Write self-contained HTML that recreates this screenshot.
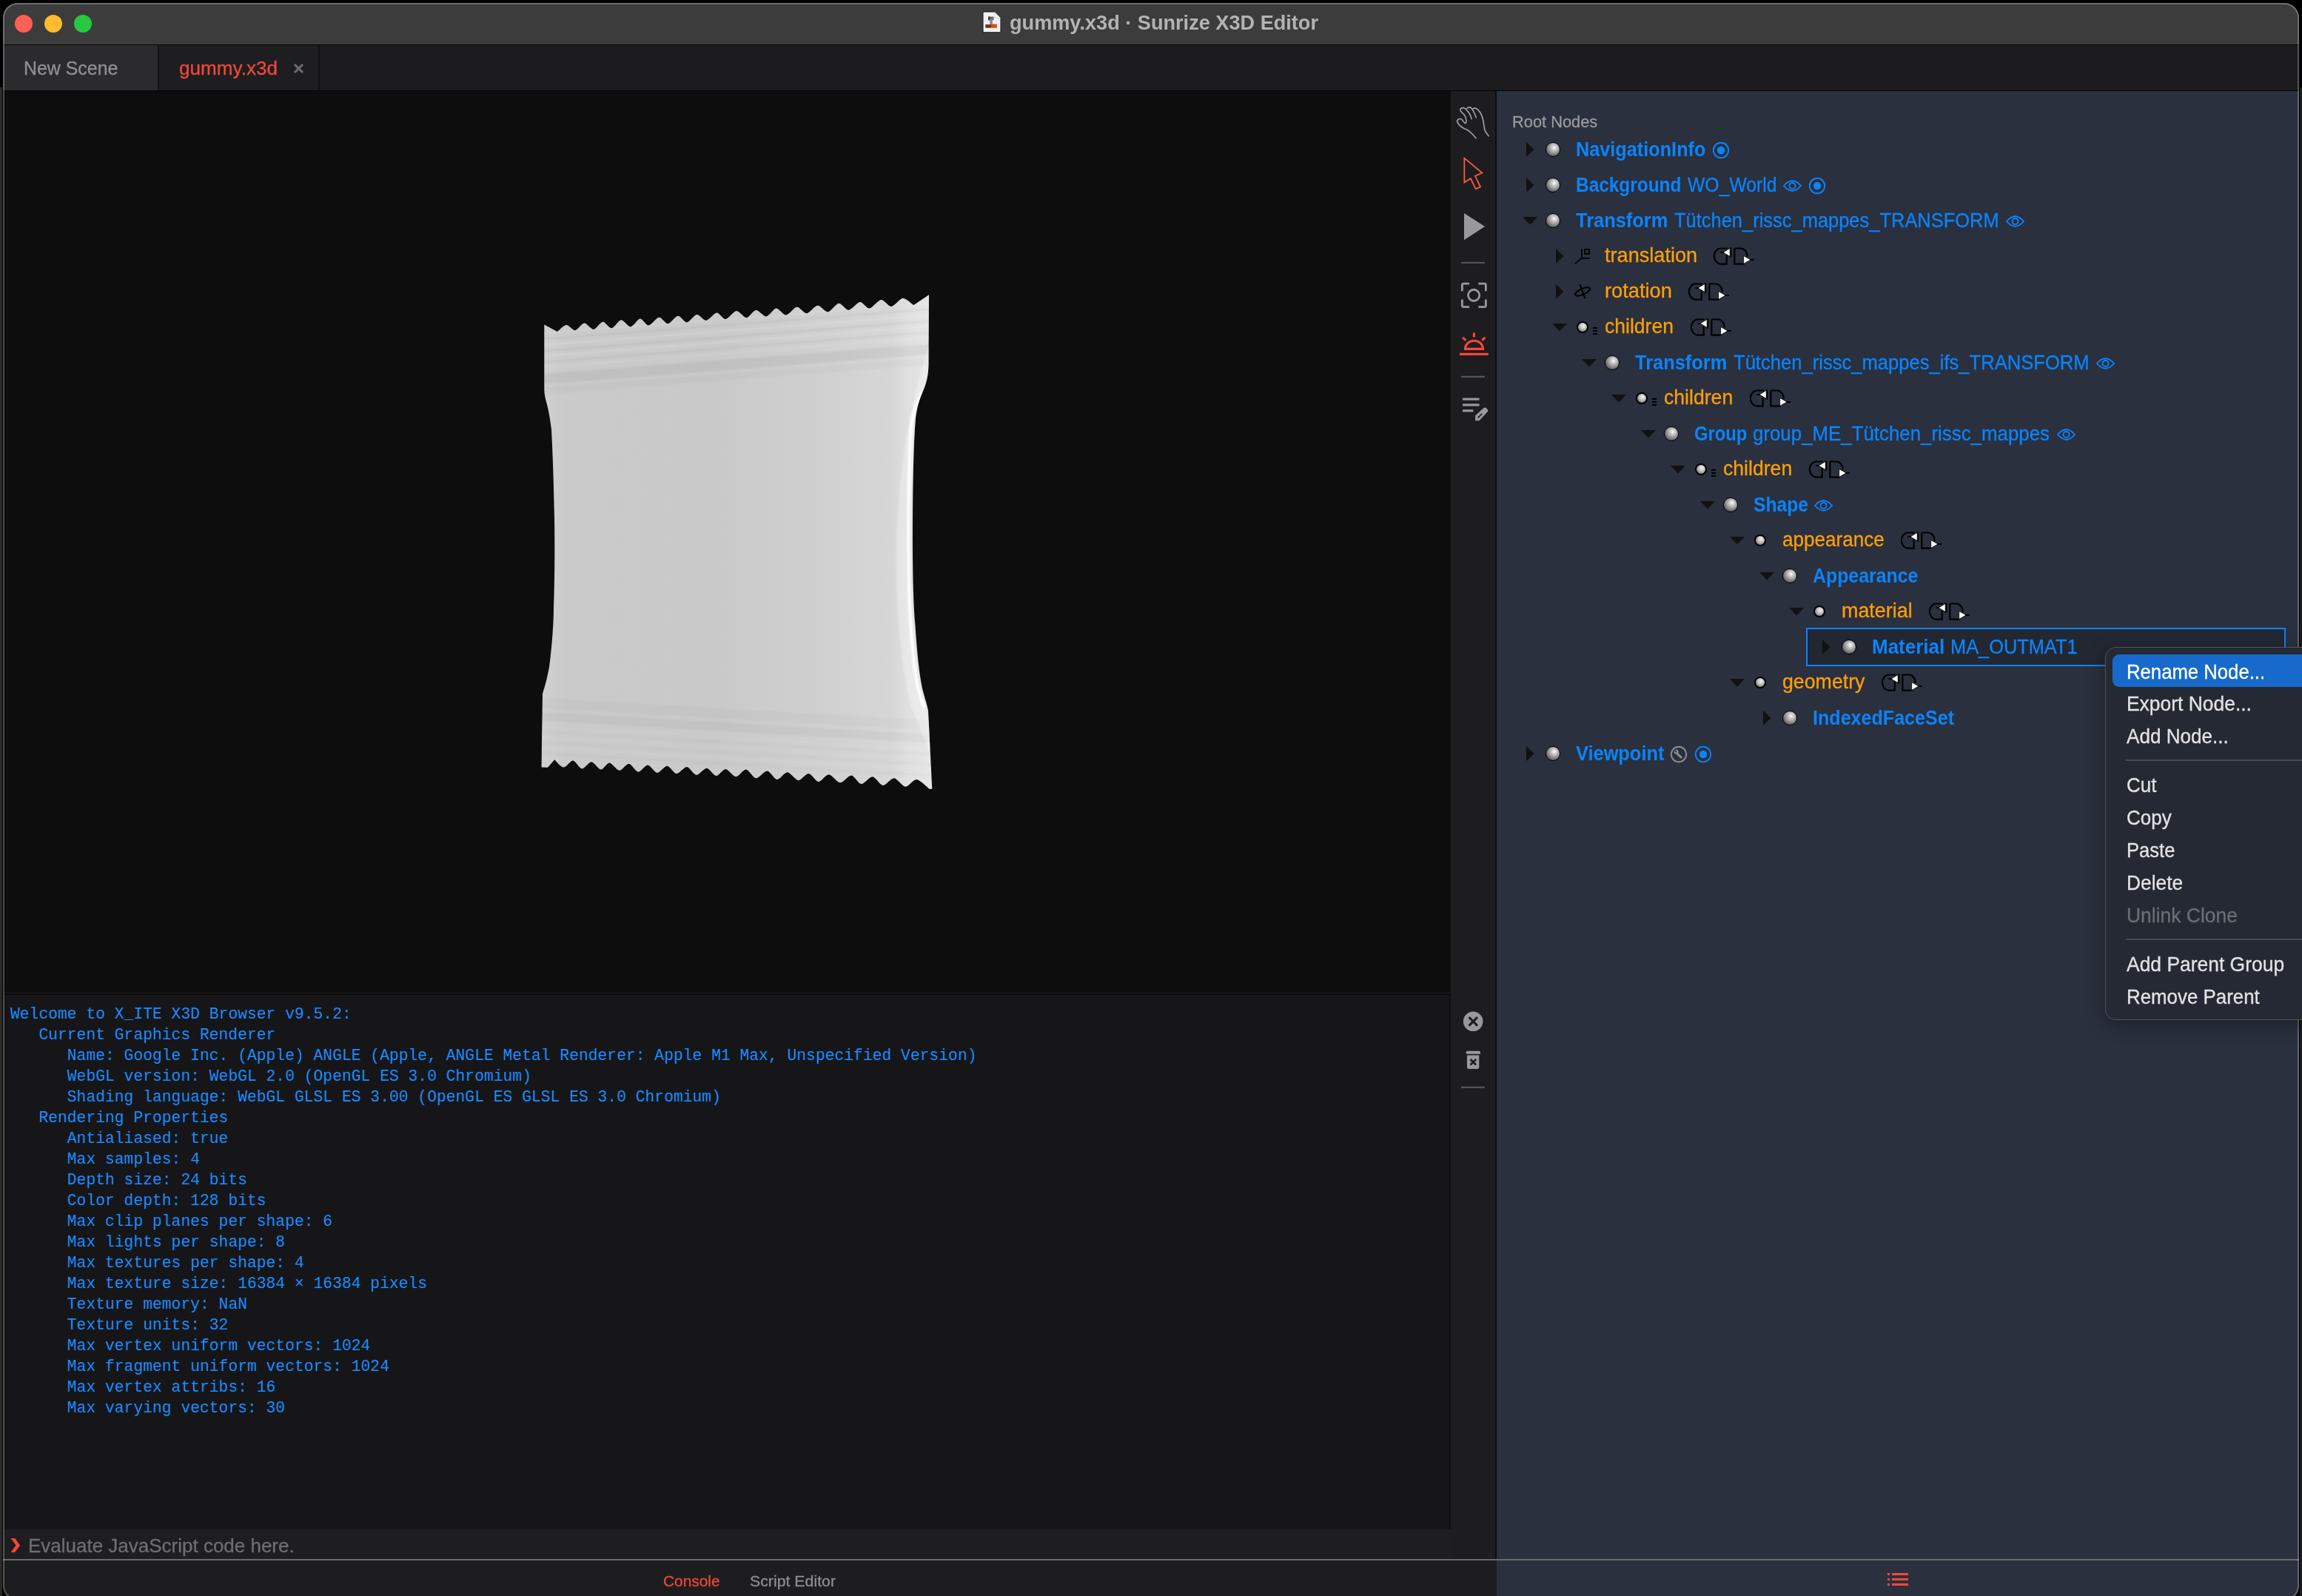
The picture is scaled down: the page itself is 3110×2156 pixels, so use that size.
<!DOCTYPE html>
<html><head><meta charset="utf-8">
<style>
*{margin:0;padding:0;box-sizing:border-box}
html,body{width:3110px;height:2156px;overflow:hidden;background:#000;font-family:"Liberation Sans",sans-serif}
.a{position:absolute;display:block}
.tx{position:absolute;line-height:0;height:0;white-space:pre}
#win{position:absolute;left:4px;top:4px;width:3102px;height:2158px;border-radius:20px;overflow:hidden;background:#1d1d1f}
#c{position:absolute;left:-4px;top:-4px;width:3110px;height:2170px}
#brd{position:absolute;left:4px;top:4px;width:3102px;height:2158px;border-radius:20px;border:2px solid rgba(255,255,255,0.25);pointer-events:none}
</style></head><body>
<div style="position:absolute;left:0;top:118px;width:3px;height:2038px;background:#2a2a26"></div><div style="position:absolute;left:3107px;top:118px;width:3px;height:2038px;background:#1c1c1c"></div>
<div id="win"><div id="c">
<div class="a" style="left:0px;top:0px;width:3110px;height:60px;background:#3c3c3c;"></div>
<div class="a" style="left:0px;top:60px;width:3110px;height:1px;background:#050505;"></div>
<div class="a" style="left:20px;top:20px;width:24px;height:24px;background:#fe5f57;border-radius:50%"></div>
<div class="a" style="left:60px;top:20px;width:24px;height:24px;background:#febc2e;border-radius:50%"></div>
<div class="a" style="left:100px;top:20px;width:24px;height:24px;background:#28c840;border-radius:50%"></div>
<div class="a" style="left:0px;top:61px;width:3110px;height:61px;background:#1c1c1e;"></div>
<div class="a" style="left:0px;top:61px;width:213px;height:61px;background:#2b2b2d;"></div>
<div class="a" style="left:213px;top:61px;width:2px;height:61px;background:#121214;"></div>
<div class="a" style="left:215px;top:61px;width:215px;height:61px;background:#1e1e20;"></div>
<div class="a" style="left:430px;top:61px;width:2px;height:61px;background:#121214;"></div>
<div class="a" style="left:0px;top:122px;width:3110px;height:1px;background:#050505;"></div>
<div class="a" style="left:0px;top:123px;width:1960px;height:1218px;background:#0d0d0d;"></div>
<div class="a" style="left:1960px;top:123px;width:61px;height:1983px;background:#1d1d1f;"></div>
<div class="a" style="left:2020px;top:123px;width:2px;height:1983px;background:#0b0b0c;"></div>
<div class="a" style="left:2022px;top:123px;width:1088px;height:1983px;background:#2a303d;"></div>
<div class="a" style="left:0px;top:1341px;width:1960px;height:1px;background:#1f1f20;"></div>
<div class="a" style="left:0px;top:1342px;width:1960px;height:2px;background:#0b0b0c;"></div>
<div class="a" style="left:0px;top:1344px;width:1960px;height:722px;background:#161618;"></div>
<div class="a" style="left:0px;top:2066px;width:1960px;height:40px;background:#1e1e20;"></div>
<div class="a" style="left:1958px;top:1344px;width:2px;height:722px;background:#0e0e0f;"></div>
<div class="a" style="left:0px;top:2106px;width:3110px;height:2px;background:#6a6a6a;"></div>
<div class="a" style="left:0px;top:2108px;width:2022px;height:60px;background:#1d1d1f;"></div>
<div class="a" style="left:2022px;top:2108px;width:1088px;height:60px;background:#2a303d;"></div>
<svg class="a" style="left:1320px;top:10px;" width="40" height="40" viewBox="0 0 1596 1596">
<path d="M320,290 Q320,240 370,240 L945,240 L1275,570 L1275,1300 Q1275,1350 1225,1350 L370,1350 Q320,1350 320,1300 Z" fill="#f2f2f2" stroke="#1a1a1a" stroke-width="40"/>
<path d="M945,250 L945,560 L1265,570 Z" fill="#fafafa" stroke="#bdbdbd" stroke-width="25"/>
<rect x="600" y="500" width="300" height="190" fill="#6d6f6c"/>
<rect x="600" y="500" width="110" height="190" fill="#3c403e"/>
<rect x="690" y="640" width="140" height="270" fill="#888a84"/>
<rect x="450" y="920" width="290" height="185" fill="#6a3620"/>
<rect x="740" y="900" width="330" height="205" fill="#e2451e"/>
<rect x="720" y="890" width="25" height="215" fill="#3a2a20"/>
</svg>
<div class="tx" style='left:1364px;top:31px;font-family:"Liberation Sans",sans-serif;font-size:27px;font-weight:bold;white-space:pre;color:#b3b3b3;transform:scaleX(1.0046);transform-origin:0 0;'>gummy.x3d · Sunrize X3D Editor</div>
<div class="tx" style='left:31.6px;top:92px;font-family:"Liberation Sans",sans-serif;font-size:25px;font-weight:normal;white-space:pre;color:#8f8f94;transform:scaleX(0.9964);transform-origin:0 0;-webkit-text-stroke:0.3px #8f8f94'>New Scene</div>
<div class="tx" style='left:241.7px;top:92px;font-family:"Liberation Sans",sans-serif;font-size:26px;font-weight:normal;white-space:pre;color:#f0473a;transform:scaleX(1.0041);transform-origin:0 0;-webkit-text-stroke:0.3px #f0473a'>gummy.x3d</div>
<svg class="a" style="left:396px;top:85px;" width="15" height="15" viewBox="0 0 15 15"><path d="M2,2 L13,13 M13,2 L2,13" stroke="#6e6e72" stroke-width="3"/></svg>
<svg class="a" style="left:700px;top:380px;" width="580" height="700" viewBox="700 380 580 700">
<defs>
<linearGradient id="bg1" gradientUnits="userSpaceOnUse" x1="731" y1="0" x2="1259" y2="0">
<stop offset="0" stop-color="#d0d0d0"/><stop offset="0.06" stop-color="#cacaca"/><stop offset="0.45" stop-color="#c9c9c9"/><stop offset="0.75" stop-color="#d1d1d1"/><stop offset="0.9" stop-color="#d7d7d7"/><stop offset="0.94" stop-color="#e0e0e0"/><stop offset="1" stop-color="#e6e6e6"/>
</linearGradient>
<clipPath id="bagc"><path d="M735.3,438.4 L752.8,448.1 C754.5,446.8 761.6,439.3 765,439 C768.4,438.7 773.8,446.6 777.2,446.3 C780.6,446.0 785.8,436.8 789.3,436.6 C792.8,436.4 798.5,445.3 802,445 C805.5,444.7 810.9,434.9 814.3,434.7 C817.7,434.5 822.9,443.6 826.4,443.3 C829.9,443.0 835.6,432.6 839.2,432.3 C842.8,432.0 848.4,441.7 852,441.4 C855.6,441.1 861.4,430.8 864.8,430.5 C868.2,430.2 872.7,439.9 876.3,439.6 C879.9,439.3 886.6,429.0 890.3,428.7 C894.0,428.4 898.9,437.5 902.5,437.2 C906.1,436.9 912.3,427.1 915.9,426.8 C919.5,426.5 924.4,435.7 928,435.4 C931.6,435.1 937.7,425.4 941.4,425 C945.1,424.6 950.4,433.2 954.2,432.9 C958.0,432.6 964.5,422.9 968.2,422.6 C971.9,422.3 976.5,431.5 980.3,431.1 C984.1,430.8 991.1,420.4 995,420.1 C998.9,419.8 1004.8,429.5 1008.5,429.3 C1012.2,429.1 1017.5,419.2 1021.3,418.9 C1025.1,418.6 1031.5,427.7 1035.3,427.4 C1039.1,427.1 1045.0,416.8 1048.7,416.5 C1052.4,416.2 1058.1,425.9 1062,425.6 C1065.9,425.3 1072.7,415.0 1076.6,414.7 C1080.5,414.4 1086.1,423.5 1090,423.2 C1093.9,422.9 1100.6,413.1 1104.6,412.8 C1108.6,412.5 1114.6,421.8 1118.6,421.4 C1122.6,421.0 1129.3,410.2 1133.2,409.8 C1137.1,409.4 1142.6,419.2 1146.6,418.9 C1150.6,418.6 1157.9,408.3 1161.8,408 C1165.7,407.7 1170.6,416.9 1174.6,416.5 C1178.6,416.1 1186.2,405.2 1190.4,404.9 C1194.6,404.5 1200.3,414.3 1204.4,414 C1208.5,413.7 1215.4,403.4 1219.6,403.1 C1223.8,402.8 1232.2,410.9 1234.2,412.2 L1255,398.2 L1254.5,492 C1254.3,506 1252,516 1248,526 C1243,537 1239,548 1237,565 C1234,600 1233,660 1233,741 C1233.2,790 1234.5,825 1236.5,845 C1238.5,875 1241,905 1246,930 C1249,942 1252,950 1254,960 L1259.3,1065.8 L1255.5,1065.8 C1253.1,1064.0 1242.9,1053.4 1238.4,1053 C1233.9,1052.6 1227.5,1063.0 1223.2,1062.7 C1218.9,1062.4 1212.3,1051.5 1208,1051.2 C1203.7,1050.9 1196.9,1061.2 1192.8,1060.9 C1188.7,1060.6 1182.9,1049.6 1178.8,1049.3 C1174.7,1049.0 1167.6,1059.4 1163.6,1059.1 C1159.6,1058.8 1154.2,1047.8 1150.2,1047.5 C1146.2,1047.2 1139.3,1057.5 1135,1057.3 C1130.7,1057.1 1123.9,1046.5 1119.8,1046.3 C1115.7,1046.1 1109.6,1056.2 1105.8,1056 C1102.0,1055.8 1096.3,1045.4 1092.5,1045.1 C1088.7,1044.8 1082.5,1054.5 1078.5,1054.2 C1074.5,1053.9 1067.9,1043.5 1063.9,1043.3 C1059.9,1043.1 1053.7,1053.3 1049.9,1053 C1046.1,1052.7 1040.5,1041.7 1036.5,1041.4 C1032.5,1041.1 1025.3,1051.5 1021.3,1051.2 C1017.3,1050.9 1011.7,1039.9 1007.9,1039.6 C1004.1,1039.3 998.2,1049.4 994.3,1049.3 C990.4,1049.2 984.0,1039.2 980.3,1039 C976.6,1038.8 971.2,1048.3 967.6,1048.1 C964.0,1047.9 958.6,1038.0 954.8,1037.8 C951.0,1037.6 944.6,1047.2 940.8,1046.9 C937.0,1046.6 931.8,1036.3 928,1036 C924.2,1035.7 917.7,1045.3 914,1045.1 C910.3,1044.9 905.0,1034.9 901.3,1034.7 C897.6,1034.5 891.6,1044.1 887.9,1043.9 C884.2,1043.7 878.7,1033.7 875.1,1033.5 C871.5,1033.3 865.9,1043.0 862.3,1042.7 C858.7,1042.4 853.2,1032.0 849.6,1031.7 C846.0,1031.4 840.5,1041.0 836.8,1040.8 C833.1,1040.6 826.9,1030.7 823.4,1030.5 C819.9,1030.3 815.2,1039.8 811.8,1039.6 C808.4,1039.4 802.7,1029.5 799.1,1029.3 C795.5,1029.1 789.8,1038.7 786.3,1038.4 C782.8,1038.1 777.6,1027.7 774.1,1027.4 C770.6,1027.1 764.9,1036.8 761.4,1036.6 C757.9,1036.4 750.9,1027.7 749.2,1026.2 L740,1036.8 L731.6,1036.6 L732,1000 L733,937 C737,925 740,912 742,901 C746,870 748,840 748,821 C749.5,780 749.5,730 749,700 C748,640 746,600 745,580 C743,565 741,553 738,543 C736.5,537 735.5,532 735.3,527 Z"/></clipPath>
<filter id="bl" filterUnits="userSpaceOnUse" x="700" y="380" width="580" height="700"><feGaussianBlur stdDeviation="1.3"/></filter>
<filter id="bl2" filterUnits="userSpaceOnUse" x="700" y="380" width="580" height="700"><feGaussianBlur stdDeviation="0.8"/></filter>
</defs>
<path d="M735.3,438.4 L752.8,448.1 C754.5,446.8 761.6,439.3 765,439 C768.4,438.7 773.8,446.6 777.2,446.3 C780.6,446.0 785.8,436.8 789.3,436.6 C792.8,436.4 798.5,445.3 802,445 C805.5,444.7 810.9,434.9 814.3,434.7 C817.7,434.5 822.9,443.6 826.4,443.3 C829.9,443.0 835.6,432.6 839.2,432.3 C842.8,432.0 848.4,441.7 852,441.4 C855.6,441.1 861.4,430.8 864.8,430.5 C868.2,430.2 872.7,439.9 876.3,439.6 C879.9,439.3 886.6,429.0 890.3,428.7 C894.0,428.4 898.9,437.5 902.5,437.2 C906.1,436.9 912.3,427.1 915.9,426.8 C919.5,426.5 924.4,435.7 928,435.4 C931.6,435.1 937.7,425.4 941.4,425 C945.1,424.6 950.4,433.2 954.2,432.9 C958.0,432.6 964.5,422.9 968.2,422.6 C971.9,422.3 976.5,431.5 980.3,431.1 C984.1,430.8 991.1,420.4 995,420.1 C998.9,419.8 1004.8,429.5 1008.5,429.3 C1012.2,429.1 1017.5,419.2 1021.3,418.9 C1025.1,418.6 1031.5,427.7 1035.3,427.4 C1039.1,427.1 1045.0,416.8 1048.7,416.5 C1052.4,416.2 1058.1,425.9 1062,425.6 C1065.9,425.3 1072.7,415.0 1076.6,414.7 C1080.5,414.4 1086.1,423.5 1090,423.2 C1093.9,422.9 1100.6,413.1 1104.6,412.8 C1108.6,412.5 1114.6,421.8 1118.6,421.4 C1122.6,421.0 1129.3,410.2 1133.2,409.8 C1137.1,409.4 1142.6,419.2 1146.6,418.9 C1150.6,418.6 1157.9,408.3 1161.8,408 C1165.7,407.7 1170.6,416.9 1174.6,416.5 C1178.6,416.1 1186.2,405.2 1190.4,404.9 C1194.6,404.5 1200.3,414.3 1204.4,414 C1208.5,413.7 1215.4,403.4 1219.6,403.1 C1223.8,402.8 1232.2,410.9 1234.2,412.2 L1255,398.2 L1254.5,492 C1254.3,506 1252,516 1248,526 C1243,537 1239,548 1237,565 C1234,600 1233,660 1233,741 C1233.2,790 1234.5,825 1236.5,845 C1238.5,875 1241,905 1246,930 C1249,942 1252,950 1254,960 L1259.3,1065.8 L1255.5,1065.8 C1253.1,1064.0 1242.9,1053.4 1238.4,1053 C1233.9,1052.6 1227.5,1063.0 1223.2,1062.7 C1218.9,1062.4 1212.3,1051.5 1208,1051.2 C1203.7,1050.9 1196.9,1061.2 1192.8,1060.9 C1188.7,1060.6 1182.9,1049.6 1178.8,1049.3 C1174.7,1049.0 1167.6,1059.4 1163.6,1059.1 C1159.6,1058.8 1154.2,1047.8 1150.2,1047.5 C1146.2,1047.2 1139.3,1057.5 1135,1057.3 C1130.7,1057.1 1123.9,1046.5 1119.8,1046.3 C1115.7,1046.1 1109.6,1056.2 1105.8,1056 C1102.0,1055.8 1096.3,1045.4 1092.5,1045.1 C1088.7,1044.8 1082.5,1054.5 1078.5,1054.2 C1074.5,1053.9 1067.9,1043.5 1063.9,1043.3 C1059.9,1043.1 1053.7,1053.3 1049.9,1053 C1046.1,1052.7 1040.5,1041.7 1036.5,1041.4 C1032.5,1041.1 1025.3,1051.5 1021.3,1051.2 C1017.3,1050.9 1011.7,1039.9 1007.9,1039.6 C1004.1,1039.3 998.2,1049.4 994.3,1049.3 C990.4,1049.2 984.0,1039.2 980.3,1039 C976.6,1038.8 971.2,1048.3 967.6,1048.1 C964.0,1047.9 958.6,1038.0 954.8,1037.8 C951.0,1037.6 944.6,1047.2 940.8,1046.9 C937.0,1046.6 931.8,1036.3 928,1036 C924.2,1035.7 917.7,1045.3 914,1045.1 C910.3,1044.9 905.0,1034.9 901.3,1034.7 C897.6,1034.5 891.6,1044.1 887.9,1043.9 C884.2,1043.7 878.7,1033.7 875.1,1033.5 C871.5,1033.3 865.9,1043.0 862.3,1042.7 C858.7,1042.4 853.2,1032.0 849.6,1031.7 C846.0,1031.4 840.5,1041.0 836.8,1040.8 C833.1,1040.6 826.9,1030.7 823.4,1030.5 C819.9,1030.3 815.2,1039.8 811.8,1039.6 C808.4,1039.4 802.7,1029.5 799.1,1029.3 C795.5,1029.1 789.8,1038.7 786.3,1038.4 C782.8,1038.1 777.6,1027.7 774.1,1027.4 C770.6,1027.1 764.9,1036.8 761.4,1036.6 C757.9,1036.4 750.9,1027.7 749.2,1026.2 L740,1036.8 L731.6,1036.6 L732,1000 L733,937 C737,925 740,912 742,901 C746,870 748,840 748,821 C749.5,780 749.5,730 749,700 C748,640 746,600 745,580 C743,565 741,553 738,543 C736.5,537 735.5,532 735.3,527 Z" fill="url(#bg1)"/>
<g clip-path="url(#bagc)">
<g filter="url(#bl)"><path d="M700,452.7 L1280,408" stroke="#ffffff" stroke-opacity="0.1" stroke-width="3" fill="none"/><path d="M700,460.7 L1280,416" stroke="#000000" stroke-opacity="0.05" stroke-width="2" fill="none"/><path d="M700,468.7 L1280,424" stroke="#ffffff" stroke-opacity="0.12" stroke-width="3" fill="none"/><path d="M700,476.7 L1280,432" stroke="#000000" stroke-opacity="0.06" stroke-width="2" fill="none"/><path d="M700,483.7 L1280,439" stroke="#ffffff" stroke-opacity="0.12" stroke-width="3" fill="none"/><path d="M700,491.7 L1280,447" stroke="#000000" stroke-opacity="0.05" stroke-width="2" fill="none"/><path d="M700,498.7 L1280,454" stroke="#ffffff" stroke-opacity="0.08" stroke-width="3" fill="none"/><path d="M700,514.7 L1280,470" stroke="#000000" stroke-opacity="0.05" stroke-width="14" fill="none"/><path d="M700,530.7 L1280,486" stroke="#000000" stroke-opacity="0.025" stroke-width="10" fill="none"/><path d="M700,948 L1280,981" stroke="#000000" stroke-opacity="0.025" stroke-width="14" fill="none"/><path d="M700,966 L1280,999" stroke="#000000" stroke-opacity="0.035" stroke-width="12" fill="none"/><path d="M700,980 L1280,1013" stroke="#ffffff" stroke-opacity="0.06" stroke-width="2" fill="none"/><path d="M700,987 L1280,1020" stroke="#000000" stroke-opacity="0.03" stroke-width="2" fill="none"/><path d="M700,994 L1280,1027" stroke="#ffffff" stroke-opacity="0.07" stroke-width="2" fill="none"/><path d="M700,1001 L1280,1034" stroke="#000000" stroke-opacity="0.03" stroke-width="2" fill="none"/><path d="M700,1008 L1280,1041" stroke="#ffffff" stroke-opacity="0.07" stroke-width="3" fill="none"/><path d="M700,1016 L1280,1049" stroke="#000000" stroke-opacity="0.03" stroke-width="2" fill="none"/><path d="M700,1024 L1280,1057" stroke="#ffffff" stroke-opacity="0.06" stroke-width="2" fill="none"/></g>
<path d="M1246,530 C1238,545 1232,560 1230,585 C1228,630 1227.5,690 1227.5,741 C1227.7,790 1229,825 1231,850 C1233,880 1235.5,905 1240,928 C1243,940 1246,948 1249,956" stroke="#ffffff" stroke-width="4" fill="none" filter="url(#bl2)"/>
<path d="M1262,470 C1240,540 1222,620 1219,741 C1218,810 1222,880 1238,950 L1262,1010" stroke="#ffffff" stroke-opacity="0.28" stroke-width="16" fill="none" filter="url(#bl)"/>
</g>
</svg>
<svg class="a" style="left:1960px;top:135px;" width="60" height="130" viewBox="0 0 737 1596">
<g fill="none" stroke="#a3a3a6" stroke-width="20" stroke-linecap="round" stroke-linejoin="round">
<path d="M420,635 C360,570 320,520 270,495 C200,470 140,430 110,370 C95,330 140,300 180,320 C210,340 225,400 250,385 C270,360 250,280 220,240 C170,200 140,170 170,140 C200,115 245,140 265,170 C295,200 330,250 345,315"/>
<path d="M270,140 C290,115 320,115 340,135 C370,170 400,230 420,290"/>
<path d="M365,150 C385,130 420,135 450,160 C500,210 540,300 550,420 C555,470 560,500 580,530 L630,600"/>
</g>
<path d="M225,965 L520,1210 L405,1262 L492,1440 L415,1478 L330,1302 L225,1370 Z" fill="none" stroke="#ff5a36" stroke-width="22" stroke-linejoin="miter"/>
</svg>
<svg class="a" style="left:1960px;top:280px;" width="60" height="140" viewBox="0 0 684 1596">
<path d="M205,90 L525,295 L205,505 Z" fill="#98989d"/>
<rect x="160" y="842" width="365" height="24" fill="#55555a"/>
<g fill="none" stroke="#98989d" stroke-width="32" stroke-linecap="butt">
<path d="M175,1290 L175,1200 Q175,1175 200,1175 L285,1175"/>
<path d="M425,1175 L515,1175 Q540,1175 540,1200 L540,1290"/>
<path d="M175,1420 L175,1510 Q175,1535 200,1535 L285,1535"/>
<path d="M425,1535 L515,1535 Q540,1535 540,1510 L540,1420"/>
<circle cx="355" cy="1355" r="87"/>
</g>
</svg>
<svg class="a" style="left:1960px;top:430px;" width="60" height="150" viewBox="0 0 638 1596">
<g fill="none" stroke="#ff453a" stroke-width="33">
<path d="M334,208 L334,270"/>
<path d="M172,275 L215,318"/>
<path d="M492,275 L450,318"/>
<path d="M207,440 A127,118 0 0 1 462,440 Z"/>
</g>
<rect x="127" y="498" width="413" height="34" fill="#ff453a"/>
<rect x="150" y="828" width="340" height="24" fill="#55555a"/>
<rect x="170" y="1145" width="240" height="33" fill="#98989d"/>
<rect x="170" y="1228" width="240" height="34" fill="#98989d"/>
<rect x="170" y="1312" width="152" height="33" fill="#98989d"/>
<path d="M352,1400 L470,1290 Q490,1272 512,1292 L525,1305 Q545,1325 525,1345 L410,1470 L352,1470 Z" fill="#98989d"/>
<path d="M390,1430 L450,1370" stroke="#1d1d1f" stroke-width="18"/>
</svg>
<svg class="a" style="left:1940px;top:1320px;" width="100" height="180" viewBox="0 0 887 1596">
<circle cx="445" cy="530" r="118" fill="#98989d"/>
<path d="M395,480 L497,582 M497,480 L395,582" stroke="#1d1d1f" stroke-width="26"/>
<path d="M362,898 Q362,885 380,885 L515,885 Q532,885 532,898 L532,920 L362,920 Z" fill="#98989d"/>
<path d="M372,935 L517,935 L517,1075 Q517,1100 490,1100 L400,1100 Q372,1100 372,1075 Z" fill="#98989d"/>
<path d="M412,985 L480,1050 M480,985 L412,1050" stroke="#1d1d1f" stroke-width="24"/>
<rect x="302" y="1310" width="283" height="20" fill="#55555a"/>
</svg>
<div class="tx" style='left:14.0px;top:1370px;font-family:"Liberation Mono",monospace;font-size:21.33px;font-weight:normal;white-space:pre;color:#1a8cff;'>Welcome to X_ITE X3D Browser v9.5.2:</div>
<div class="tx" style='left:52.4px;top:1398px;font-family:"Liberation Mono",monospace;font-size:21.33px;font-weight:normal;white-space:pre;color:#1a8cff;'>Current Graphics Renderer</div>
<div class="tx" style='left:90.8px;top:1426px;font-family:"Liberation Mono",monospace;font-size:21.33px;font-weight:normal;white-space:pre;color:#1a8cff;'>Name: Google Inc. (Apple) ANGLE (Apple, ANGLE Metal Renderer: Apple M1 Max, Unspecified Version)</div>
<div class="tx" style='left:90.8px;top:1454px;font-family:"Liberation Mono",monospace;font-size:21.33px;font-weight:normal;white-space:pre;color:#1a8cff;'>WebGL version: WebGL 2.0 (OpenGL ES 3.0 Chromium)</div>
<div class="tx" style='left:90.8px;top:1482px;font-family:"Liberation Mono",monospace;font-size:21.33px;font-weight:normal;white-space:pre;color:#1a8cff;'>Shading language: WebGL GLSL ES 3.00 (OpenGL ES GLSL ES 3.0 Chromium)</div>
<div class="tx" style='left:52.4px;top:1510px;font-family:"Liberation Mono",monospace;font-size:21.33px;font-weight:normal;white-space:pre;color:#1a8cff;'>Rendering Properties</div>
<div class="tx" style='left:90.8px;top:1538px;font-family:"Liberation Mono",monospace;font-size:21.33px;font-weight:normal;white-space:pre;color:#1a8cff;'>Antialiased: true</div>
<div class="tx" style='left:90.8px;top:1566px;font-family:"Liberation Mono",monospace;font-size:21.33px;font-weight:normal;white-space:pre;color:#1a8cff;'>Max samples: 4</div>
<div class="tx" style='left:90.8px;top:1594px;font-family:"Liberation Mono",monospace;font-size:21.33px;font-weight:normal;white-space:pre;color:#1a8cff;'>Depth size: 24 bits</div>
<div class="tx" style='left:90.8px;top:1622px;font-family:"Liberation Mono",monospace;font-size:21.33px;font-weight:normal;white-space:pre;color:#1a8cff;'>Color depth: 128 bits</div>
<div class="tx" style='left:90.8px;top:1650px;font-family:"Liberation Mono",monospace;font-size:21.33px;font-weight:normal;white-space:pre;color:#1a8cff;'>Max clip planes per shape: 6</div>
<div class="tx" style='left:90.8px;top:1678px;font-family:"Liberation Mono",monospace;font-size:21.33px;font-weight:normal;white-space:pre;color:#1a8cff;'>Max lights per shape: 8</div>
<div class="tx" style='left:90.8px;top:1706px;font-family:"Liberation Mono",monospace;font-size:21.33px;font-weight:normal;white-space:pre;color:#1a8cff;'>Max textures per shape: 4</div>
<div class="tx" style='left:90.8px;top:1734px;font-family:"Liberation Mono",monospace;font-size:21.33px;font-weight:normal;white-space:pre;color:#1a8cff;'>Max texture size: 16384 × 16384 pixels</div>
<div class="tx" style='left:90.8px;top:1762px;font-family:"Liberation Mono",monospace;font-size:21.33px;font-weight:normal;white-space:pre;color:#1a8cff;'>Texture memory: NaN</div>
<div class="tx" style='left:90.8px;top:1790px;font-family:"Liberation Mono",monospace;font-size:21.33px;font-weight:normal;white-space:pre;color:#1a8cff;'>Texture units: 32</div>
<div class="tx" style='left:90.8px;top:1818px;font-family:"Liberation Mono",monospace;font-size:21.33px;font-weight:normal;white-space:pre;color:#1a8cff;'>Max vertex uniform vectors: 1024</div>
<div class="tx" style='left:90.8px;top:1846px;font-family:"Liberation Mono",monospace;font-size:21.33px;font-weight:normal;white-space:pre;color:#1a8cff;'>Max fragment uniform vectors: 1024</div>
<div class="tx" style='left:90.8px;top:1874px;font-family:"Liberation Mono",monospace;font-size:21.33px;font-weight:normal;white-space:pre;color:#1a8cff;'>Max vertex attribs: 16</div>
<div class="tx" style='left:90.8px;top:1902px;font-family:"Liberation Mono",monospace;font-size:21.33px;font-weight:normal;white-space:pre;color:#1a8cff;'>Max varying vectors: 30</div>
<svg class="a" style="left:0px;top:2066px;" width="40" height="40" viewBox="0 2066 40 40"><path d="M14.6,2078 L20.1,2078 L27.1,2087.4 L20.1,2097 L14.6,2097 L21.6,2087.4 Z" fill="#ff453a"/></svg>
<div class="tx" style='left:37.8px;top:2088px;font-family:"Liberation Sans",sans-serif;font-size:26px;font-weight:normal;white-space:pre;color:#6e6e73;transform:scaleX(0.9995);transform-origin:0 0;-webkit-text-stroke:0.3px #6e6e73'>Evaluate JavaScript code here.</div>
<div class="tx" style='left:896px;top:2135.5px;font-family:"Liberation Sans",sans-serif;font-size:21px;font-weight:normal;white-space:pre;color:#f0473a;transform:scaleX(0.9927);transform-origin:0 0;-webkit-text-stroke:0.3px #f0473a'>Console</div>
<div class="tx" style='left:1013px;top:2135.5px;font-family:"Liberation Sans",sans-serif;font-size:21px;font-weight:normal;white-space:pre;color:#8e8e93;transform:scaleX(1.0142);transform-origin:0 0;-webkit-text-stroke:0.3px #8e8e93'>Script Editor</div>
<svg class="a" style="left:2550px;top:2124px;" width="30" height="20" viewBox="0 0 30 20">
<rect x="0" y="1" width="3" height="3" fill="#ff453a"/><rect x="6" y="1" width="22" height="3" fill="#ff453a"/>
<rect x="0" y="8" width="3" height="3" fill="#ff453a"/><rect x="6" y="8" width="22" height="3" fill="#ff453a"/>
<rect x="0" y="15" width="3" height="3" fill="#ff453a"/><rect x="6" y="15" width="22" height="3" fill="#ff453a"/>
</svg>
<div class="tx" style='left:2042.8px;top:164.8px;font-family:"Liberation Sans",sans-serif;font-size:22px;font-weight:normal;white-space:pre;color:#9a9a9e;transform:scaleX(0.9915);transform-origin:0 0;-webkit-text-stroke:0.3px #9a9a9e'>Root Nodes</div>
<svg class="a" style="left:2062px;top:192px;" width="11" height="20" viewBox="0 0 11 20"><path d="M0,0 L10.5,10 L0,20 Z" fill="#111113"/></svg>
<div class="a" style="left:2088px;top:192px;width:20px;height:20px;border-radius:50%;border:1.3px solid #000;background:radial-gradient(circle at 60% 35%, #ffffff 0%, #dadada 14%, #9c9c9c 45%, #5c5c5c 75%, #262626 100%)"></div>
<div class="tx" style='left:2128.6px;top:202px;font-family:"Liberation Sans",sans-serif;font-size:27.3px;font-weight:bold;white-space:pre;color:#0a84ff;transform:scaleX(0.9253);transform-origin:0 0;'>NavigationInfo</div>
<svg class="a" style="left:2312.6px;top:191.3px;" width="24" height="24" viewBox="0 0 24 24"><circle cx="12" cy="12" r="10.2" fill="none" stroke="#0a84ff" stroke-width="1.9"/><circle cx="12" cy="12" r="5.2" fill="#0a84ff"/></svg>
<svg class="a" style="left:2062px;top:240px;" width="11" height="20" viewBox="0 0 11 20"><path d="M0,0 L10.5,10 L0,20 Z" fill="#111113"/></svg>
<div class="a" style="left:2088px;top:240px;width:20px;height:20px;border-radius:50%;border:1.3px solid #000;background:radial-gradient(circle at 60% 35%, #ffffff 0%, #dadada 14%, #9c9c9c 45%, #5c5c5c 75%, #262626 100%)"></div>
<div class="tx" style='left:2128.6px;top:250px;font-family:"Liberation Sans",sans-serif;font-size:27.3px;font-weight:bold;white-space:pre;color:#0a84ff;transform:scaleX(0.8942);transform-origin:0 0;'>Background</div>
<div class="tx" style='left:2279.8px;top:250px;font-family:"Liberation Sans",sans-serif;font-size:27.3px;font-weight:normal;white-space:pre;color:#0a84ff;transform:scaleX(0.9070);transform-origin:0 0;-webkit-text-stroke:0.3px #0a84ff'>WO_World</div>
<svg class="a" style="left:2409.0px;top:242.2px;" width="25" height="18" viewBox="0 0 26 18"><path d="M1,9 Q13,-5 25,9 Q13,23 1,9 Z" fill="none" stroke="#0a84ff" stroke-width="1.9"/><circle cx="13" cy="9" r="4.2" fill="none" stroke="#0a84ff" stroke-width="1.9"/></svg>
<svg class="a" style="left:2443px;top:239.3px;" width="24" height="24" viewBox="0 0 24 24"><circle cx="12" cy="12" r="10.2" fill="none" stroke="#0a84ff" stroke-width="1.9"/><circle cx="12" cy="12" r="5.2" fill="#0a84ff"/></svg>
<svg class="a" style="left:2057px;top:293px;" width="20" height="11" viewBox="0 0 20 11"><path d="M0,0 L20,0 L10,10.5 Z" fill="#111113"/></svg>
<div class="a" style="left:2088px;top:288px;width:20px;height:20px;border-radius:50%;border:1.3px solid #000;background:radial-gradient(circle at 60% 35%, #ffffff 0%, #dadada 14%, #9c9c9c 45%, #5c5c5c 75%, #262626 100%)"></div>
<div class="tx" style='left:2128.6px;top:298px;font-family:"Liberation Sans",sans-serif;font-size:27.3px;font-weight:bold;white-space:pre;color:#0a84ff;transform:scaleX(0.9318);transform-origin:0 0;'>Transform</div>
<div class="tx" style='left:2261.6px;top:298px;font-family:"Liberation Sans",sans-serif;font-size:27.3px;font-weight:normal;white-space:pre;color:#0a84ff;transform:scaleX(0.9329);transform-origin:0 0;-webkit-text-stroke:0.3px #0a84ff'>Tütchen_rissc_mappes_TRANSFORM</div>
<svg class="a" style="left:2709.5px;top:290.2px;" width="25" height="18" viewBox="0 0 26 18"><path d="M1,9 Q13,-5 25,9 Q13,23 1,9 Z" fill="none" stroke="#0a84ff" stroke-width="1.9"/><circle cx="13" cy="9" r="4.2" fill="none" stroke="#0a84ff" stroke-width="1.9"/></svg>
<svg class="a" style="left:2102px;top:336px;" width="11" height="20" viewBox="0 0 11 20"><path d="M0,0 L10.5,10 L0,20 Z" fill="#111113"/></svg>
<svg class="a" style="left:2120px;top:325px;" width="40" height="80" viewBox="0 0 798 1596">
<g stroke="#000" stroke-width="35" fill="none">
<path d="M337,220 L337,478 L555,478"/><path d="M337,478 L155,620"/><rect x="418" y="238" width="120" height="120"/>
</g></svg>
<div class="tx" style='left:2168.2px;top:345px;font-family:"Liberation Sans",sans-serif;font-size:27.8px;font-weight:normal;white-space:pre;color:#ff9f0a;transform:scaleX(0.9754);transform-origin:0 0;-webkit-text-stroke:0.3px #ff9f0a'>translation</div>
<svg class="a" style="left:2299.2px;top:325px;" width="80" height="40" viewBox="0 0 2302 1151">
<g fill="none" stroke="#000" stroke-width="64">
<path d="M1000,302 L720,302 A265,305 0 0 0 720,908 L970,908 L970,560"/>
<path d="M1275,302 L1275,908 L1660,908 M1275,302 L1520,302 A265,290 0 0 1 1770,620"/>
</g>
<rect x="1075" y="270" width="85" height="380" fill="#000"/>
<path d="M1100,300 L1100,620 L830,460 Z" fill="#fff" stroke="#000" stroke-width="24" stroke-linejoin="round"/>
<path d="M730,460 L860,460" stroke="#000" stroke-width="56"/>
<path d="M1630,590 L1630,905 L1905,748 Z" fill="#fff" stroke="#000" stroke-width="24" stroke-linejoin="round"/>
<path d="M1880,748 L2040,748" stroke="#000" stroke-width="56"/>
</svg>
<svg class="a" style="left:2102px;top:384px;" width="11" height="20" viewBox="0 0 11 20"><path d="M0,0 L10.5,10 L0,20 Z" fill="#111113"/></svg>
<svg class="a" style="left:2120px;top:325px;" width="40" height="80" viewBox="0 0 798 1596">
<g stroke="#000" stroke-width="40" fill="none">
<ellipse cx="360" cy="1375" rx="215" ry="78" transform="rotate(-24 360 1375)"/>
<path d="M290,1180 L425,1560"/>
</g></svg>
<div class="tx" style='left:2168.2px;top:393px;font-family:"Liberation Sans",sans-serif;font-size:27.8px;font-weight:normal;white-space:pre;color:#ff9f0a;transform:scaleX(0.9804);transform-origin:0 0;-webkit-text-stroke:0.3px #ff9f0a'>rotation</div>
<svg class="a" style="left:2265.3999999999996px;top:373px;" width="80" height="40" viewBox="0 0 2302 1151">
<g fill="none" stroke="#000" stroke-width="64">
<path d="M1000,302 L720,302 A265,305 0 0 0 720,908 L970,908 L970,560"/>
<path d="M1275,302 L1275,908 L1660,908 M1275,302 L1520,302 A265,290 0 0 1 1770,620"/>
</g>
<rect x="1075" y="270" width="85" height="380" fill="#000"/>
<path d="M1100,300 L1100,620 L830,460 Z" fill="#fff" stroke="#000" stroke-width="24" stroke-linejoin="round"/>
<path d="M730,460 L860,460" stroke="#000" stroke-width="56"/>
<path d="M1630,590 L1630,905 L1905,748 Z" fill="#fff" stroke="#000" stroke-width="24" stroke-linejoin="round"/>
<path d="M1880,748 L2040,748" stroke="#000" stroke-width="56"/>
</svg>
<svg class="a" style="left:2097px;top:437px;" width="20" height="11" viewBox="0 0 20 11"><path d="M0,0 L20,0 L10,10.5 Z" fill="#111113"/></svg>
<div class="a" style="left:2130px;top:434px;width:16px;height:16px;border-radius:50%;border:2px solid #000;background:radial-gradient(circle at 60% 35%, #f4f4f4 0%, #c0c0c0 40%, #7a7a7a 80%, #404040 100%)"></div>
<div class="a" style="left:2152px;top:442px;width:6px;height:2px;background:#000;"></div>
<div class="a" style="left:2152px;top:446px;width:6px;height:2px;background:#000;"></div>
<div class="a" style="left:2152px;top:450px;width:6px;height:2px;background:#000;"></div>
<div class="tx" style='left:2168.2px;top:441px;font-family:"Liberation Sans",sans-serif;font-size:27.8px;font-weight:normal;white-space:pre;color:#ff9f0a;transform:scaleX(0.9543);transform-origin:0 0;-webkit-text-stroke:0.3px #ff9f0a'>children</div>
<svg class="a" style="left:2268.0px;top:421px;" width="80" height="40" viewBox="0 0 2302 1151">
<g fill="none" stroke="#000" stroke-width="64">
<path d="M1000,302 L720,302 A265,305 0 0 0 720,908 L970,908 L970,560"/>
<path d="M1275,302 L1275,908 L1660,908 M1275,302 L1520,302 A265,290 0 0 1 1770,620"/>
</g>
<rect x="1075" y="270" width="85" height="380" fill="#000"/>
<path d="M1100,300 L1100,620 L830,460 Z" fill="#fff" stroke="#000" stroke-width="24" stroke-linejoin="round"/>
<path d="M730,460 L860,460" stroke="#000" stroke-width="56"/>
<path d="M1630,590 L1630,905 L1905,748 Z" fill="#fff" stroke="#000" stroke-width="24" stroke-linejoin="round"/>
<path d="M1880,748 L2040,748" stroke="#000" stroke-width="56"/>
</svg>
<svg class="a" style="left:2137px;top:485px;" width="20" height="11" viewBox="0 0 20 11"><path d="M0,0 L20,0 L10,10.5 Z" fill="#111113"/></svg>
<div class="a" style="left:2168px;top:480px;width:20px;height:20px;border-radius:50%;border:1.3px solid #000;background:radial-gradient(circle at 60% 35%, #ffffff 0%, #dadada 14%, #9c9c9c 45%, #5c5c5c 75%, #262626 100%)"></div>
<div class="tx" style='left:2208.6px;top:490px;font-family:"Liberation Sans",sans-serif;font-size:27.3px;font-weight:bold;white-space:pre;color:#0a84ff;transform:scaleX(0.9318);transform-origin:0 0;'>Transform</div>
<div class="tx" style='left:2341.6px;top:490px;font-family:"Liberation Sans",sans-serif;font-size:27.3px;font-weight:normal;white-space:pre;color:#0a84ff;transform:scaleX(0.9373);transform-origin:0 0;-webkit-text-stroke:0.3px #0a84ff'>Tütchen_rissc_mappes_ifs_TRANSFORM</div>
<svg class="a" style="left:2831.5px;top:482.2px;" width="25" height="18" viewBox="0 0 26 18"><path d="M1,9 Q13,-5 25,9 Q13,23 1,9 Z" fill="none" stroke="#0a84ff" stroke-width="1.9"/><circle cx="13" cy="9" r="4.2" fill="none" stroke="#0a84ff" stroke-width="1.9"/></svg>
<svg class="a" style="left:2177px;top:533px;" width="20" height="11" viewBox="0 0 20 11"><path d="M0,0 L20,0 L10,10.5 Z" fill="#111113"/></svg>
<div class="a" style="left:2210px;top:530px;width:16px;height:16px;border-radius:50%;border:2px solid #000;background:radial-gradient(circle at 60% 35%, #f4f4f4 0%, #c0c0c0 40%, #7a7a7a 80%, #404040 100%)"></div>
<div class="a" style="left:2232px;top:538px;width:6px;height:2px;background:#000;"></div>
<div class="a" style="left:2232px;top:542px;width:6px;height:2px;background:#000;"></div>
<div class="a" style="left:2232px;top:546px;width:6px;height:2px;background:#000;"></div>
<div class="tx" style='left:2248.2px;top:537px;font-family:"Liberation Sans",sans-serif;font-size:27.8px;font-weight:normal;white-space:pre;color:#ff9f0a;transform:scaleX(0.9574);transform-origin:0 0;-webkit-text-stroke:0.3px #ff9f0a'>children</div>
<svg class="a" style="left:2347.7px;top:517px;" width="80" height="40" viewBox="0 0 2302 1151">
<g fill="none" stroke="#000" stroke-width="64">
<path d="M1000,302 L720,302 A265,305 0 0 0 720,908 L970,908 L970,560"/>
<path d="M1275,302 L1275,908 L1660,908 M1275,302 L1520,302 A265,290 0 0 1 1770,620"/>
</g>
<rect x="1075" y="270" width="85" height="380" fill="#000"/>
<path d="M1100,300 L1100,620 L830,460 Z" fill="#fff" stroke="#000" stroke-width="24" stroke-linejoin="round"/>
<path d="M730,460 L860,460" stroke="#000" stroke-width="56"/>
<path d="M1630,590 L1630,905 L1905,748 Z" fill="#fff" stroke="#000" stroke-width="24" stroke-linejoin="round"/>
<path d="M1880,748 L2040,748" stroke="#000" stroke-width="56"/>
</svg>
<svg class="a" style="left:2217px;top:581px;" width="20" height="11" viewBox="0 0 20 11"><path d="M0,0 L20,0 L10,10.5 Z" fill="#111113"/></svg>
<div class="a" style="left:2248px;top:576px;width:20px;height:20px;border-radius:50%;border:1.3px solid #000;background:radial-gradient(circle at 60% 35%, #ffffff 0%, #dadada 14%, #9c9c9c 45%, #5c5c5c 75%, #262626 100%)"></div>
<div class="tx" style='left:2288.6px;top:586px;font-family:"Liberation Sans",sans-serif;font-size:27.3px;font-weight:bold;white-space:pre;color:#0a84ff;transform:scaleX(0.8719);transform-origin:0 0;'>Group</div>
<div class="tx" style='left:2368px;top:586px;font-family:"Liberation Sans",sans-serif;font-size:27.3px;font-weight:normal;white-space:pre;color:#0a84ff;transform:scaleX(0.9472);transform-origin:0 0;-webkit-text-stroke:0.3px #0a84ff'>group_ME_Tütchen_rissc_mappes</div>
<svg class="a" style="left:2778.5px;top:578.2px;" width="25" height="18" viewBox="0 0 26 18"><path d="M1,9 Q13,-5 25,9 Q13,23 1,9 Z" fill="none" stroke="#0a84ff" stroke-width="1.9"/><circle cx="13" cy="9" r="4.2" fill="none" stroke="#0a84ff" stroke-width="1.9"/></svg>
<svg class="a" style="left:2257px;top:629px;" width="20" height="11" viewBox="0 0 20 11"><path d="M0,0 L20,0 L10,10.5 Z" fill="#111113"/></svg>
<div class="a" style="left:2290px;top:626px;width:16px;height:16px;border-radius:50%;border:2px solid #000;background:radial-gradient(circle at 60% 35%, #f4f4f4 0%, #c0c0c0 40%, #7a7a7a 80%, #404040 100%)"></div>
<div class="a" style="left:2312px;top:634px;width:6px;height:2px;background:#000;"></div>
<div class="a" style="left:2312px;top:638px;width:6px;height:2px;background:#000;"></div>
<div class="a" style="left:2312px;top:642px;width:6px;height:2px;background:#000;"></div>
<div class="tx" style='left:2328.2px;top:633px;font-family:"Liberation Sans",sans-serif;font-size:27.8px;font-weight:normal;white-space:pre;color:#ff9f0a;transform:scaleX(0.9574);transform-origin:0 0;-webkit-text-stroke:0.3px #ff9f0a'>children</div>
<svg class="a" style="left:2427.6px;top:613px;" width="80" height="40" viewBox="0 0 2302 1151">
<g fill="none" stroke="#000" stroke-width="64">
<path d="M1000,302 L720,302 A265,305 0 0 0 720,908 L970,908 L970,560"/>
<path d="M1275,302 L1275,908 L1660,908 M1275,302 L1520,302 A265,290 0 0 1 1770,620"/>
</g>
<rect x="1075" y="270" width="85" height="380" fill="#000"/>
<path d="M1100,300 L1100,620 L830,460 Z" fill="#fff" stroke="#000" stroke-width="24" stroke-linejoin="round"/>
<path d="M730,460 L860,460" stroke="#000" stroke-width="56"/>
<path d="M1630,590 L1630,905 L1905,748 Z" fill="#fff" stroke="#000" stroke-width="24" stroke-linejoin="round"/>
<path d="M1880,748 L2040,748" stroke="#000" stroke-width="56"/>
</svg>
<svg class="a" style="left:2297px;top:677px;" width="20" height="11" viewBox="0 0 20 11"><path d="M0,0 L20,0 L10,10.5 Z" fill="#111113"/></svg>
<div class="a" style="left:2328px;top:672px;width:20px;height:20px;border-radius:50%;border:1.3px solid #000;background:radial-gradient(circle at 60% 35%, #ffffff 0%, #dadada 14%, #9c9c9c 45%, #5c5c5c 75%, #262626 100%)"></div>
<div class="tx" style='left:2368.6px;top:682px;font-family:"Liberation Sans",sans-serif;font-size:27.3px;font-weight:bold;white-space:pre;color:#0a84ff;transform:scaleX(0.9021);transform-origin:0 0;'>Shape</div>
<svg class="a" style="left:2450.5px;top:674.2px;" width="25" height="18" viewBox="0 0 26 18"><path d="M1,9 Q13,-5 25,9 Q13,23 1,9 Z" fill="none" stroke="#0a84ff" stroke-width="1.9"/><circle cx="13" cy="9" r="4.2" fill="none" stroke="#0a84ff" stroke-width="1.9"/></svg>
<svg class="a" style="left:2337px;top:725px;" width="20" height="11" viewBox="0 0 20 11"><path d="M0,0 L20,0 L10,10.5 Z" fill="#111113"/></svg>
<div class="a" style="left:2370px;top:722px;width:16px;height:16px;border-radius:50%;border:2px solid #000;background:radial-gradient(circle at 60% 35%, #f4f4f4 0%, #c0c0c0 40%, #7a7a7a 80%, #404040 100%)"></div>
<div class="tx" style='left:2408.2px;top:729px;font-family:"Liberation Sans",sans-serif;font-size:27.8px;font-weight:normal;white-space:pre;color:#ff9f0a;transform:scaleX(0.9384);transform-origin:0 0;-webkit-text-stroke:0.3px #ff9f0a'>appearance</div>
<svg class="a" style="left:2551.7px;top:709px;" width="80" height="40" viewBox="0 0 2302 1151">
<g fill="none" stroke="#000" stroke-width="64">
<path d="M1000,302 L720,302 A265,305 0 0 0 720,908 L970,908 L970,560"/>
<path d="M1275,302 L1275,908 L1660,908 M1275,302 L1520,302 A265,290 0 0 1 1770,620"/>
</g>
<rect x="1075" y="270" width="85" height="380" fill="#000"/>
<path d="M1100,300 L1100,620 L830,460 Z" fill="#fff" stroke="#000" stroke-width="24" stroke-linejoin="round"/>
<path d="M730,460 L860,460" stroke="#000" stroke-width="56"/>
<path d="M1630,590 L1630,905 L1905,748 Z" fill="#fff" stroke="#000" stroke-width="24" stroke-linejoin="round"/>
<path d="M1880,748 L2040,748" stroke="#000" stroke-width="56"/>
</svg>
<svg class="a" style="left:2377px;top:773px;" width="20" height="11" viewBox="0 0 20 11"><path d="M0,0 L20,0 L10,10.5 Z" fill="#111113"/></svg>
<div class="a" style="left:2408px;top:768px;width:20px;height:20px;border-radius:50%;border:1.3px solid #000;background:radial-gradient(circle at 60% 35%, #ffffff 0%, #dadada 14%, #9c9c9c 45%, #5c5c5c 75%, #262626 100%)"></div>
<div class="tx" style='left:2448.6px;top:778px;font-family:"Liberation Sans",sans-serif;font-size:27.3px;font-weight:bold;white-space:pre;color:#0a84ff;transform:scaleX(0.9106);transform-origin:0 0;'>Appearance</div>
<svg class="a" style="left:2417px;top:821px;" width="20" height="11" viewBox="0 0 20 11"><path d="M0,0 L20,0 L10,10.5 Z" fill="#111113"/></svg>
<div class="a" style="left:2450px;top:818px;width:16px;height:16px;border-radius:50%;border:2px solid #000;background:radial-gradient(circle at 60% 35%, #f4f4f4 0%, #c0c0c0 40%, #7a7a7a 80%, #404040 100%)"></div>
<div class="tx" style='left:2488.2px;top:825px;font-family:"Liberation Sans",sans-serif;font-size:27.8px;font-weight:normal;white-space:pre;color:#ff9f0a;transform:scaleX(0.9679);transform-origin:0 0;-webkit-text-stroke:0.3px #ff9f0a'>material</div>
<svg class="a" style="left:2589.5px;top:805px;" width="80" height="40" viewBox="0 0 2302 1151">
<g fill="none" stroke="#000" stroke-width="64">
<path d="M1000,302 L720,302 A265,305 0 0 0 720,908 L970,908 L970,560"/>
<path d="M1275,302 L1275,908 L1660,908 M1275,302 L1520,302 A265,290 0 0 1 1770,620"/>
</g>
<rect x="1075" y="270" width="85" height="380" fill="#000"/>
<path d="M1100,300 L1100,620 L830,460 Z" fill="#fff" stroke="#000" stroke-width="24" stroke-linejoin="round"/>
<path d="M730,460 L860,460" stroke="#000" stroke-width="56"/>
<path d="M1630,590 L1630,905 L1905,748 Z" fill="#fff" stroke="#000" stroke-width="24" stroke-linejoin="round"/>
<path d="M1880,748 L2040,748" stroke="#000" stroke-width="56"/>
</svg>
<div class="a" style="left:2440px;top:848px;width:648px;height:52px;background:#232731;border:2px solid #0a84ff"></div>
<svg class="a" style="left:2462px;top:864px;" width="11" height="20" viewBox="0 0 11 20"><path d="M0,0 L10.5,10 L0,20 Z" fill="#111113"/></svg>
<div class="a" style="left:2488px;top:864px;width:20px;height:20px;border-radius:50%;border:1.3px solid #000;background:radial-gradient(circle at 60% 35%, #ffffff 0%, #dadada 14%, #9c9c9c 45%, #5c5c5c 75%, #262626 100%)"></div>
<div class="tx" style='left:2528.6px;top:874px;font-family:"Liberation Sans",sans-serif;font-size:27.3px;font-weight:bold;white-space:pre;color:#0a84ff;transform:scaleX(0.9518);transform-origin:0 0;'>Material</div>
<div class="tx" style='left:2635.2px;top:874px;font-family:"Liberation Sans",sans-serif;font-size:27.3px;font-weight:normal;white-space:pre;color:#0a84ff;transform:scaleX(0.9294);transform-origin:0 0;-webkit-text-stroke:0.3px #0a84ff'>MA_OUTMAT1</div>
<svg class="a" style="left:2337px;top:917px;" width="20" height="11" viewBox="0 0 20 11"><path d="M0,0 L20,0 L10,10.5 Z" fill="#111113"/></svg>
<div class="a" style="left:2370px;top:914px;width:16px;height:16px;border-radius:50%;border:2px solid #000;background:radial-gradient(circle at 60% 35%, #f4f4f4 0%, #c0c0c0 40%, #7a7a7a 80%, #404040 100%)"></div>
<div class="tx" style='left:2408.2px;top:921px;font-family:"Liberation Sans",sans-serif;font-size:27.8px;font-weight:normal;white-space:pre;color:#ff9f0a;transform:scaleX(0.9622);transform-origin:0 0;-webkit-text-stroke:0.3px #ff9f0a'>geometry</div>
<svg class="a" style="left:2525.6px;top:901px;" width="80" height="40" viewBox="0 0 2302 1151">
<g fill="none" stroke="#000" stroke-width="64">
<path d="M1000,302 L720,302 A265,305 0 0 0 720,908 L970,908 L970,560"/>
<path d="M1275,302 L1275,908 L1660,908 M1275,302 L1520,302 A265,290 0 0 1 1770,620"/>
</g>
<rect x="1075" y="270" width="85" height="380" fill="#000"/>
<path d="M1100,300 L1100,620 L830,460 Z" fill="#fff" stroke="#000" stroke-width="24" stroke-linejoin="round"/>
<path d="M730,460 L860,460" stroke="#000" stroke-width="56"/>
<path d="M1630,590 L1630,905 L1905,748 Z" fill="#fff" stroke="#000" stroke-width="24" stroke-linejoin="round"/>
<path d="M1880,748 L2040,748" stroke="#000" stroke-width="56"/>
</svg>
<svg class="a" style="left:2382px;top:960px;" width="11" height="20" viewBox="0 0 11 20"><path d="M0,0 L10.5,10 L0,20 Z" fill="#111113"/></svg>
<div class="a" style="left:2408px;top:960px;width:20px;height:20px;border-radius:50%;border:1.3px solid #000;background:radial-gradient(circle at 60% 35%, #ffffff 0%, #dadada 14%, #9c9c9c 45%, #5c5c5c 75%, #262626 100%)"></div>
<div class="tx" style='left:2448.6px;top:970px;font-family:"Liberation Sans",sans-serif;font-size:27.3px;font-weight:bold;white-space:pre;color:#0a84ff;transform:scaleX(0.9194);transform-origin:0 0;'>IndexedFaceSet</div>
<svg class="a" style="left:2062px;top:1008px;" width="11" height="20" viewBox="0 0 11 20"><path d="M0,0 L10.5,10 L0,20 Z" fill="#111113"/></svg>
<div class="a" style="left:2088px;top:1008px;width:20px;height:20px;border-radius:50%;border:1.3px solid #000;background:radial-gradient(circle at 60% 35%, #ffffff 0%, #dadada 14%, #9c9c9c 45%, #5c5c5c 75%, #262626 100%)"></div>
<div class="tx" style='left:2128.6px;top:1018px;font-family:"Liberation Sans",sans-serif;font-size:27.3px;font-weight:bold;white-space:pre;color:#0a84ff;transform:scaleX(0.9297);transform-origin:0 0;'>Viewpoint</div>
<svg class="a" style="left:2256px;top:1007px;" width="24" height="24" viewBox="0 0 24 24"><circle cx="12" cy="12" r="10.2" fill="none" stroke="#8e8e93" stroke-width="1.9"/><path d="M8,9 L15,16" stroke="#8e8e93" stroke-width="3" stroke-linecap="round"/><circle cx="8.5" cy="8.5" r="3" fill="#8e8e93"/><path d="M6,6 L9,9" stroke="#2b303c" stroke-width="1.6"/></svg>
<svg class="a" style="left:2289px;top:1007.0px;" width="24" height="24" viewBox="0 0 24 24"><circle cx="12" cy="12" r="10.2" fill="none" stroke="#0a84ff" stroke-width="1.9"/><circle cx="12" cy="12" r="5.2" fill="#0a84ff"/></svg>
</div></div><div id="brd"></div>
<div class="a" style="left:2843.5px;top:873.5px;width:300px;height:504px;border-radius:14px;background:#252933;border:1.5px solid #50545c;box-shadow:0 6px 24px rgba(0,0,0,0.35)"></div>
<div class="a" style="left:2854px;top:884px;width:300px;height:44px;background:#176acb;border-radius:9px"></div>
<div class="tx" style='left:2873px;top:907.5px;font-family:"Liberation Sans",sans-serif;font-size:27.3px;font-weight:normal;white-space:pre;color:#ffffff;transform:scaleX(0.9412);transform-origin:0 0;-webkit-text-stroke:0.3px #ffffff'>Rename Node...</div>
<div class="tx" style='left:2873px;top:951.3px;font-family:"Liberation Sans",sans-serif;font-size:27.3px;font-weight:normal;white-space:pre;color:#e3e3e6;transform:scaleX(0.9680);transform-origin:0 0;-webkit-text-stroke:0.3px #e3e3e6'>Export Node...</div>
<div class="tx" style='left:2873px;top:994.7px;font-family:"Liberation Sans",sans-serif;font-size:27.3px;font-weight:normal;white-space:pre;color:#e3e3e6;transform:scaleX(0.9558);transform-origin:0 0;-webkit-text-stroke:0.3px #e3e3e6'>Add Node...</div>
<div class="tx" style='left:2873px;top:1061px;font-family:"Liberation Sans",sans-serif;font-size:27.3px;font-weight:normal;white-space:pre;color:#e3e3e6;transform:scaleX(0.9509);transform-origin:0 0;-webkit-text-stroke:0.3px #e3e3e6'>Cut</div>
<div class="tx" style='left:2873px;top:1105px;font-family:"Liberation Sans",sans-serif;font-size:27.3px;font-weight:normal;white-space:pre;color:#e3e3e6;transform:scaleX(0.9524);transform-origin:0 0;-webkit-text-stroke:0.3px #e3e3e6'>Copy</div>
<div class="tx" style='left:2873px;top:1148.6px;font-family:"Liberation Sans",sans-serif;font-size:27.3px;font-weight:normal;white-space:pre;color:#e3e3e6;transform:scaleX(0.9368);transform-origin:0 0;-webkit-text-stroke:0.3px #e3e3e6'>Paste</div>
<div class="tx" style='left:2873px;top:1193px;font-family:"Liberation Sans",sans-serif;font-size:27.3px;font-weight:normal;white-space:pre;color:#e3e3e6;transform:scaleX(0.9644);transform-origin:0 0;-webkit-text-stroke:0.3px #e3e3e6'>Delete</div>
<div class="tx" style='left:2873px;top:1236.7px;font-family:"Liberation Sans",sans-serif;font-size:27.3px;font-weight:normal;white-space:pre;color:#6b6e75;transform:scaleX(0.9692);transform-origin:0 0;-webkit-text-stroke:0.3px #6b6e75'>Unlink Clone</div>
<div class="tx" style='left:2873px;top:1302.7px;font-family:"Liberation Sans",sans-serif;font-size:27.3px;font-weight:normal;white-space:pre;color:#e3e3e6;transform:scaleX(0.9685);transform-origin:0 0;-webkit-text-stroke:0.3px #e3e3e6'>Add Parent Group</div>
<div class="tx" style='left:2873px;top:1346.7px;font-family:"Liberation Sans",sans-serif;font-size:27.3px;font-weight:normal;white-space:pre;color:#e3e3e6;transform:scaleX(0.9475);transform-origin:0 0;-webkit-text-stroke:0.3px #e3e3e6'>Remove Parent</div>
<div class="a" style="left:2872px;top:1026px;width:260px;height:2px;background:#474b54;"></div>
<div class="a" style="left:2872px;top:1268px;width:260px;height:2px;background:#474b54;"></div></body></html>
